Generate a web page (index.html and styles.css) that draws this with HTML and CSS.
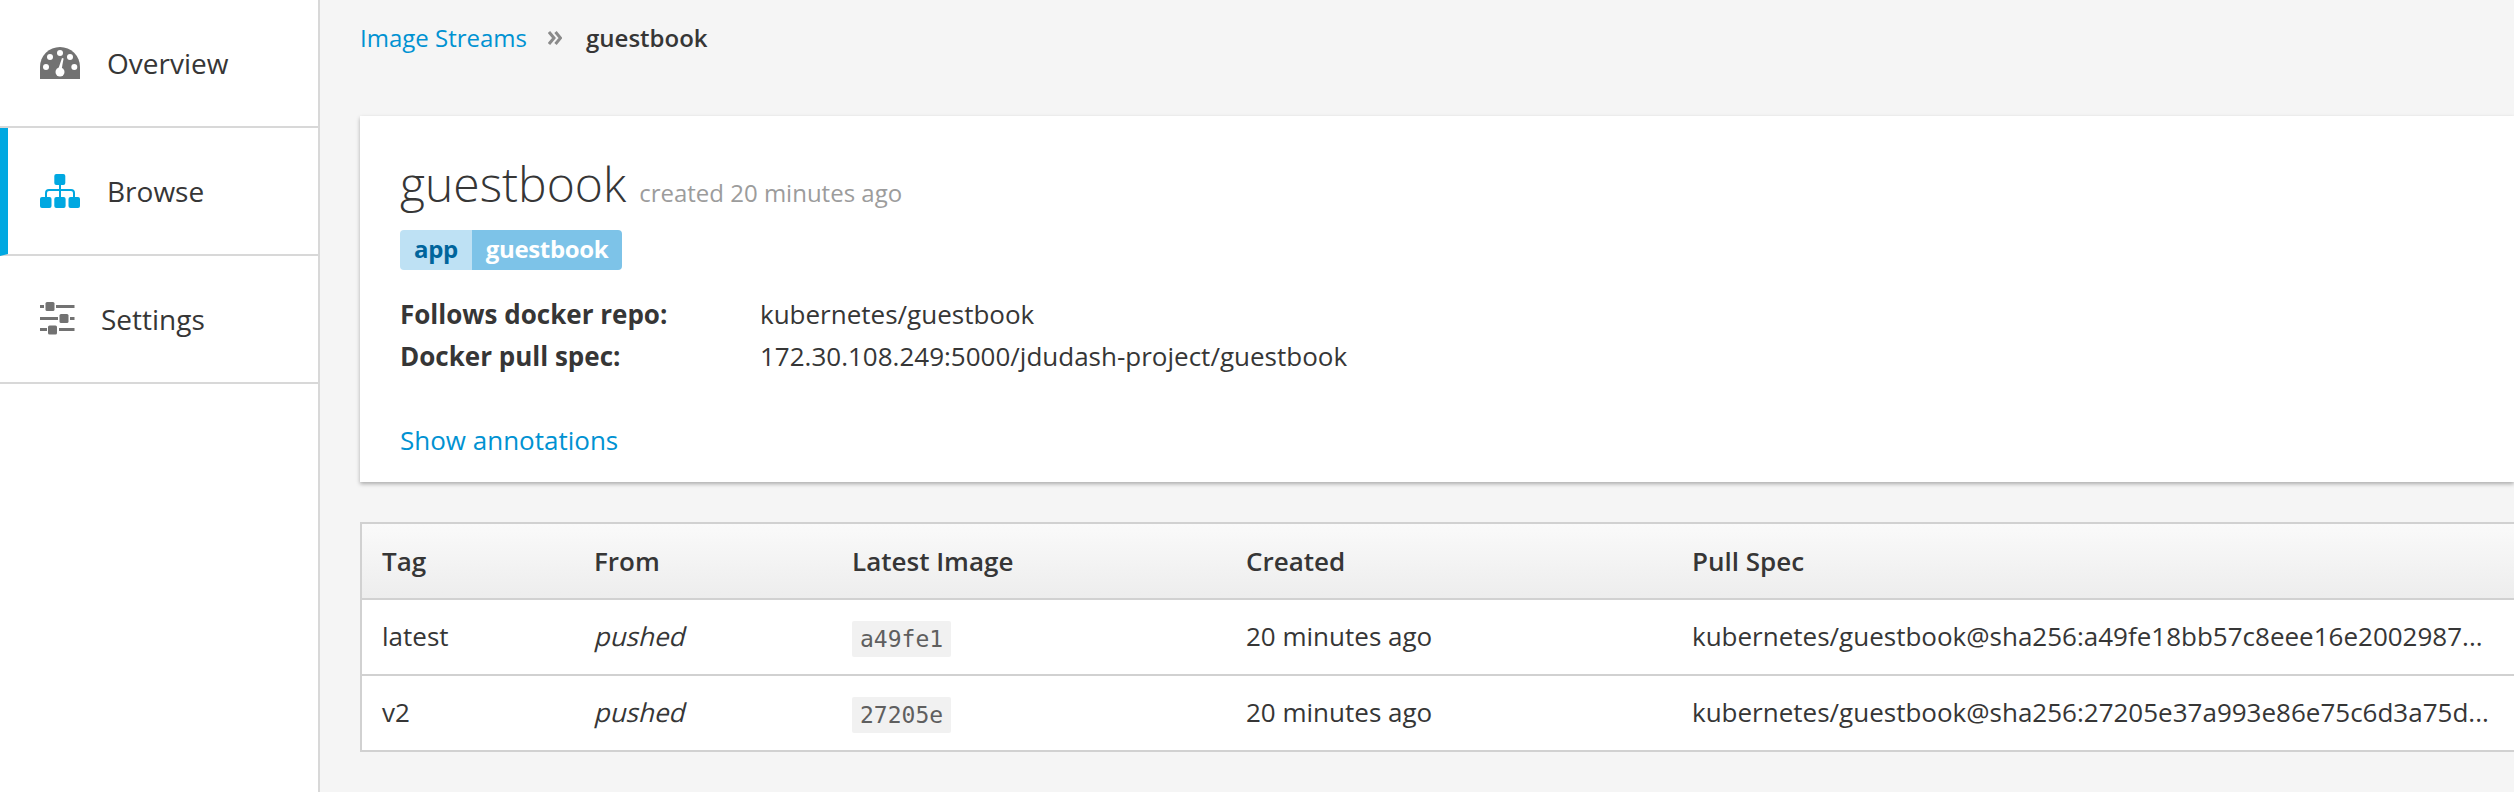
FILE: index.html
```html
<!doctype html>
<html lang="en">
<head>
    <meta charset="UTF-8">
    <title>guestbook</title>
    <link rel="stylesheet" href="styles.css">
</head>
<body>
<div class="page">
    <ul class="nav">
        <li class="nav-item">
            <svg class="nav-icon" width="40" height="32" viewBox="0 0 40 32">
                <path fill="#727272" d="M0 32V20a20 20 0 0 1 40 0v12z"/>
                <g fill="#fff">
                    <circle cx="6" cy="20" r="3"/>
                    <circle cx="10" cy="10" r="3"/>
                    <circle cx="20" cy="6" r="3"/>
                    <circle cx="30" cy="10" r="3"/>
                    <circle cx="34.3" cy="20" r="3"/>
                    <circle cx="20" cy="25" r="4.5"/>
                    <path d="M22 11l1.6.4-2.2 12-3.4-.6z"/>
                </g>
            </svg>
            <span>Overview</span>
        </li>
        <li class="nav-item active">
            <svg class="nav-icon" width="40" height="34" viewBox="0 0 40 34">
                <g fill="#00a8e1">
                    <rect x="14.3" y="0" width="11" height="11" rx="2"/>
                    <rect x="0" y="23" width="11.5" height="11" rx="2"/>
                    <rect x="14.3" y="23" width="11.3" height="11" rx="2"/>
                    <rect x="28.5" y="23" width="11.5" height="11" rx="2"/>
                </g>
                <path fill="none" stroke="#00a8e1" stroke-width="2" d="M20 11v12M6 23v-4a3 3 0 0 1 3-3h22a3 3 0 0 1 3 3v4"/>
            </svg>
            <span>Browse</span>
        </li>
        <li class="nav-item settings">
            <svg class="nav-icon" width="35" height="32" viewBox="0 0 35 32">
                <g fill="#727272">
                    <rect x="0" y="2" width="34.5" height="3"/>
                    <rect x="0" y="14" width="34.5" height="3"/>
                    <rect x="0" y="25" width="34.5" height="3"/>
                </g>
                <g fill="#fff">
                    <rect x="4" y="0" width="12" height="8"/>
                    <rect x="18" y="11" width="12" height="9"/>
                    <rect x="7" y="22" width="12" height="9"/>
                </g>
                <g fill="#727272">
                    <rect x="5.5" y="-1" width="9" height="9" rx="1.5"/>
                    <rect x="19.5" y="11" width="9" height="9" rx="1.5"/>
                    <rect x="8" y="22.5" width="9" height="9" rx="1.5"/>
                </g>
            </svg>
            <span>Settings</span>
        </li>
    </ul>
    <div class="main">
        <div class="crumbs">
            <a class="link" href="#">Image Streams</a>
            <svg class="crumb-sep" width="14" height="14" viewBox="0 0 14 14">
                <path fill="none" stroke="#8a8a8a" stroke-width="3" d="M1 1l5 6-5 6M7.5 1l5 6-5 6"/>
            </svg>
            <span class="crumb-current">guestbook</span>
        </div>
        <div class="card">
            <div class="title-row">
                <h1>guestbook</h1>
                <small>created 20 minutes ago</small>
            </div>
            <div class="labels"><span class="label-key">app</span><span class="label-value">guestbook</span></div>
            <dl class="details">
                <dt>Follows docker repo:</dt>
                <dd>kubernetes/guestbook</dd>
                <dt>Docker pull spec:</dt>
                <dd>172.30.108.249:5000/jdudash-project/guestbook</dd>
            </dl>
            <a class="link annotations" href="#">Show annotations</a>
        </div>
        <table class="tags">
            <colgroup>
                <col class="col-tag">
                <col class="col-from">
                <col class="col-image">
                <col class="col-created">
                <col>
            </colgroup>
            <thead>
            <tr>
                <th>Tag</th>
                <th>From</th>
                <th>Latest Image</th>
                <th>Created</th>
                <th>Pull Spec</th>
            </tr>
            </thead>
            <tbody>
            <tr>
                <td>latest</td>
                <td><em>pushed</em></td>
                <td><code>a49fe1</code></td>
                <td>20 minutes ago</td>
                <td>kubernetes/guestbook@sha256:a49fe18bb57c8eee16e2002987...</td>
            </tr>
            <tr>
                <td>v2</td>
                <td><em>pushed</em></td>
                <td><code>27205e</code></td>
                <td>20 minutes ago</td>
                <td>kubernetes/guestbook@sha256:27205e37a993e86e75c6d3a75d...</td>
            </tr>
            </tbody>
        </table>
    </div>
</div>
</body>
</html>
```
FILE: styles.css
```css
*{
    box-sizing: border-box;
}
html,body{
    margin: 0;
    padding: 0;
    height: 100%;
    overflow: hidden;
}
body{
    background-color: #f5f5f5;
    font-family: "Open Sans", "Liberation Sans", sans-serif;
    font-size: 26px;
    color: #363636;
}
.page{
    display: flex;
    height: 792px;
}
.nav{
    width: 320px;
    flex: none;
    margin: 0;
    padding: 0;
    list-style: none;
    background-color: #fff;
    border-right: 2px solid #d8d8d8;
}
.nav-item{
    display: flex;
    align-items: center;
    gap: 27px;
    height: 128px;
    padding-left: 40px;
    border-bottom: 2px solid #d8d8d8;
    font-size: 28px;
}
.nav-item.active{
    padding-left: 32px;
    border-left: 8px solid #00a8e1;
}
.nav-item.settings{
    gap: 26px;
}
.nav-icon{
    flex: none;
    overflow: visible;
}
.main{
    flex: none;
    width: 2194px;
    padding-left: 40px;
}
.link{
    color: #0092d2;
    text-decoration: none;
}
.crumbs{
    display: flex;
    align-items: center;
    height: 74px;
    font-size: 24px;
}
.crumb-sep{
    margin: 2px 24px 0 21px;
}
.crumb-current{
    font-weight: 600;
}
.card{
    margin-top: 42px;
    height: 366px;
    padding: 35px 40px 0;
    background-color: #fff;
    box-shadow: 0 2px 4px rgba(0,0,0,.3);
}
.title-row{
    display: flex;
    align-items: baseline;
    gap: 13px;
    height: 79px;
}
h1{
    margin: 0;
    font-size: 48px;
    font-weight: 300;
}
small{
    font-size: 24px;
    color: #9c9c9c;
}
.labels{
    display: flex;
    height: 40px;
    font-size: 24px;
    font-weight: 700;
    line-height: 38px;
    letter-spacing: -.35px;
}
.label-key{
    padding: 0 14px;
    background-color: #bee1f4;
    color: #00659c;
    border-radius: 4px 0 0 4px;
}
.label-value{
    padding: 0 14px;
    background-color: #7dc3e8;
    color: #fff;
    border-radius: 0 4px 4px 0;
}
.details{
    display: grid;
    grid-template-columns: 360px 1fr;
    margin: 23px 0 0;
    line-height: 42px;
}
dt{
    font-weight: 700;
}
dd{
    margin: 0;
}
.annotations{
    display: block;
    margin-top: 42px;
    line-height: 42px;
}
.tags{
    width: 2200px;
    margin-top: 40px;
    border-collapse: separate;
    border-spacing: 0;
    table-layout: fixed;
    background-color: #fff;
    border: 2px solid #d1d1d1;
}
.col-tag{
    width: 212px;
}
.col-from{
    width: 258px;
}
.col-image{
    width: 394px;
}
.col-created{
    width: 446px;
}
.tags th,.tags td{
    padding: 0 0 0 20px;
    text-align: left;
    white-space: nowrap;
}
.tags th{
    height: 76px;
    font-weight: 600;
    background: linear-gradient(#fafafa, #ededed);
    border-bottom: 2px solid #d1d1d1;
}
.tags td{
    height: 76px;
    padding-bottom: 2px;
    border-bottom: 2px solid #d1d1d1;
}
.tags tr:last-child td{
    height: 74px;
    border-bottom: 0;
}
.tags em{
    display: inline-block;
    margin-left: 2px;
    font-style: normal;
    transform: skewX(-14deg);
}
code{
    display: inline-block;
    padding: 0 8px;
    background-color: #f1f1f1;
    color: #5f5f5f;
    font-family: "DejaVu Sans Mono", monospace;
    font-size: 23px;
    line-height: 36px;
    border-radius: 2px;
    vertical-align: -3px;
}
```
